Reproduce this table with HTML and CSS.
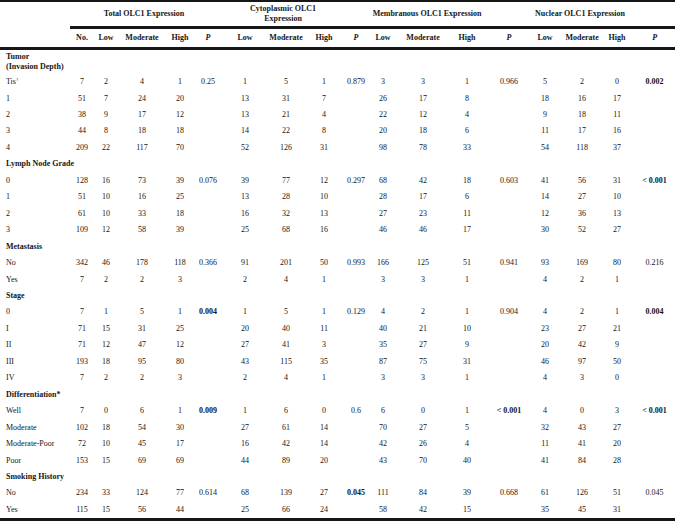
FILE: index.html
```html
<!DOCTYPE html>
<html lang="en">
<head>
<meta charset="utf-8">
<title>OLC1 Expression</title>
<link rel="stylesheet" href="styles.css">
</head>
<body>
<table class="olc">
  <colgroup>
    <col class="c-label"><col class="c-no">
    <col class="c-24"><col class="c-48"><col class="c-28"><col class="c-28">
    <col class="c-46"><col class="c-36"><col class="c-40"><col class="c-24">
    <col class="c-30"><col class="c-50"><col class="c-38"><col class="c-46">
    <col class="c-26"><col class="c-48"><col class="c-22"><col class="c-47">
  </colgroup>
  <thead>
    <tr class="group">
      <th class="blank"></th>
      <th class="ruled"></th>
      <th class="ruled" colspan="3">Total OLC1 Expression</th>
      <th class="ruled"></th>
      <th class="ruled" colspan="3">Cytoplasmic OLC1<br>Expression</th>
      <th class="ruled"></th>
      <th class="ruled" colspan="3">Membranous OLC1 Expression</th>
      <th class="ruled"></th>
      <th class="ruled" colspan="3">Nuclear OLC1 Expression</th>
      <th class="ruled"></th>
    </tr>
    <tr class="cols">
      <th></th><th>No.</th>
      <th>Low</th><th>Moderate</th><th>High</th><th class="p">P</th>
      <th>Low</th><th>Moderate</th><th>High</th><th class="p">P</th>
      <th>Low</th><th>Moderate</th><th>High</th><th class="p">P</th>
      <th>Low</th><th>Moderate</th><th>High</th><th class="p last">P</th>
    </tr>
  </thead>
  <tbody>
    <tr class="section tall"><td colspan="18">Tumor<br>(Invasion Depth)</td></tr>
    <tr><td>Tis<sup>†</sup></td><td>7</td><td>2</td><td>4</td><td>1</td><td>0.25</td><td>1</td><td>5</td><td>1</td><td>0.879</td><td>3</td><td>3</td><td>1</td><td>0.966</td><td>5</td><td>2</td><td>0</td><td class="last b">0.002</td></tr>
    <tr><td>1</td><td>51</td><td>7</td><td>24</td><td>20</td><td></td><td>13</td><td>31</td><td>7</td><td></td><td>26</td><td>17</td><td>8</td><td></td><td>18</td><td>16</td><td>17</td><td class="last"></td></tr>
    <tr><td>2</td><td>38</td><td>9</td><td>17</td><td>12</td><td></td><td>13</td><td>21</td><td>4</td><td></td><td>22</td><td>12</td><td>4</td><td></td><td>9</td><td>18</td><td>11</td><td class="last"></td></tr>
    <tr><td>3</td><td>44</td><td>8</td><td>18</td><td>18</td><td></td><td>14</td><td>22</td><td>8</td><td></td><td>20</td><td>18</td><td>6</td><td></td><td>11</td><td>17</td><td>16</td><td class="last"></td></tr>
    <tr><td>4</td><td>209</td><td>22</td><td>117</td><td>70</td><td></td><td>52</td><td>126</td><td>31</td><td></td><td>98</td><td>78</td><td>33</td><td></td><td>54</td><td>118</td><td>37</td><td class="last"></td></tr>

    <tr class="section"><td colspan="18">Lymph Node Grade</td></tr>
    <tr><td>0</td><td>128</td><td>16</td><td>73</td><td>39</td><td>0.076</td><td>39</td><td>77</td><td>12</td><td>0.297</td><td>68</td><td>42</td><td>18</td><td>0.603</td><td>41</td><td>56</td><td>31</td><td class="last b">&lt; 0.001</td></tr>
    <tr><td>1</td><td>51</td><td>10</td><td>16</td><td>25</td><td></td><td>13</td><td>28</td><td>10</td><td></td><td>28</td><td>17</td><td>6</td><td></td><td>14</td><td>27</td><td>10</td><td class="last"></td></tr>
    <tr><td>2</td><td>61</td><td>10</td><td>33</td><td>18</td><td></td><td>16</td><td>32</td><td>13</td><td></td><td>27</td><td>23</td><td>11</td><td></td><td>12</td><td>36</td><td>13</td><td class="last"></td></tr>
    <tr><td>3</td><td>109</td><td>12</td><td>58</td><td>39</td><td></td><td>25</td><td>68</td><td>16</td><td></td><td>46</td><td>46</td><td>17</td><td></td><td>30</td><td>52</td><td>27</td><td class="last"></td></tr>

    <tr class="section"><td colspan="18">Metastasis</td></tr>
    <tr><td>No</td><td>342</td><td>46</td><td>178</td><td>118</td><td>0.366</td><td>91</td><td>201</td><td>50</td><td>0.993</td><td>166</td><td>125</td><td>51</td><td>0.941</td><td>93</td><td>169</td><td>80</td><td class="last">0.216</td></tr>
    <tr><td>Yes</td><td>7</td><td>2</td><td>2</td><td>3</td><td></td><td>2</td><td>4</td><td>1</td><td></td><td>3</td><td>3</td><td>1</td><td></td><td>4</td><td>2</td><td>1</td><td class="last"></td></tr>

    <tr class="section"><td colspan="18">Stage</td></tr>
    <tr><td>0</td><td>7</td><td>1</td><td>5</td><td>1</td><td class="b">0.004</td><td>1</td><td>5</td><td>1</td><td>0.129</td><td>4</td><td>2</td><td>1</td><td>0.904</td><td>4</td><td>2</td><td>1</td><td class="last b">0.004</td></tr>
    <tr><td>I</td><td>71</td><td>15</td><td>31</td><td>25</td><td></td><td>20</td><td>40</td><td>11</td><td></td><td>40</td><td>21</td><td>10</td><td></td><td>23</td><td>27</td><td>21</td><td class="last"></td></tr>
    <tr><td>II</td><td>71</td><td>12</td><td>47</td><td>12</td><td></td><td>27</td><td>41</td><td>3</td><td></td><td>35</td><td>27</td><td>9</td><td></td><td>20</td><td>42</td><td>9</td><td class="last"></td></tr>
    <tr><td>III</td><td>193</td><td>18</td><td>95</td><td>80</td><td></td><td>43</td><td>115</td><td>35</td><td></td><td>87</td><td>75</td><td>31</td><td></td><td>46</td><td>97</td><td>50</td><td class="last"></td></tr>
    <tr><td>IV</td><td>7</td><td>2</td><td>2</td><td>3</td><td></td><td>2</td><td>4</td><td>1</td><td></td><td>3</td><td>3</td><td>1</td><td></td><td>4</td><td>3</td><td>0</td><td class="last"></td></tr>

    <tr class="section"><td colspan="18">Differentiation*</td></tr>
    <tr><td>Well</td><td>7</td><td>0</td><td>6</td><td>1</td><td class="b">0.009</td><td>1</td><td>6</td><td>0</td><td>0.6</td><td>6</td><td>0</td><td>1</td><td class="b">&lt; 0.001</td><td>4</td><td>0</td><td>3</td><td class="last b">&lt; 0.001</td></tr>
    <tr><td>Moderate</td><td>102</td><td>18</td><td>54</td><td>30</td><td></td><td>27</td><td>61</td><td>14</td><td></td><td>70</td><td>27</td><td>5</td><td></td><td>32</td><td>43</td><td>27</td><td class="last"></td></tr>
    <tr><td>Moderate-Poor</td><td>72</td><td>10</td><td>45</td><td>17</td><td></td><td>16</td><td>42</td><td>14</td><td></td><td>42</td><td>26</td><td>4</td><td></td><td>11</td><td>41</td><td>20</td><td class="last"></td></tr>
    <tr><td>Poor</td><td>153</td><td>15</td><td>69</td><td>69</td><td></td><td>44</td><td>89</td><td>20</td><td></td><td>43</td><td>70</td><td>40</td><td></td><td>41</td><td>84</td><td>28</td><td class="last"></td></tr>

    <tr class="section"><td colspan="18">Smoking History</td></tr>
    <tr><td>No</td><td>234</td><td>33</td><td>124</td><td>77</td><td>0.614</td><td>68</td><td>139</td><td>27</td><td class="b">0.045</td><td>111</td><td>84</td><td>39</td><td>0.668</td><td>61</td><td>126</td><td>51</td><td class="last">0.045</td></tr>
    <tr class="end"><td>Yes</td><td>115</td><td>15</td><td>56</td><td>44</td><td></td><td>25</td><td>66</td><td>24</td><td></td><td>58</td><td>42</td><td>15</td><td></td><td>35</td><td>45</td><td>31</td><td class="last"></td></tr>
  </tbody>
</table>
</body>
</html>
```

FILE: styles.css
```css
html, body {
  margin: 0;
  padding: 0;
  background: #ffffff;
}

body {
  font-family: "Liberation Serif", "Times New Roman", serif;
  font-size: 8px;
  color: #161616;
}

.olc {
  width: 675px;
  table-layout: fixed;
  border-collapse: separate;
  border-spacing: 0;
}

.c-label { width: 70px; }
.c-no { width: 24px; }
.c-22 { width: 22px; }
.c-24 { width: 24px; }
.c-26 { width: 26px; }
.c-28 { width: 28px; }
.c-30 { width: 30px; }
.c-36 { width: 36px; }
.c-38 { width: 38px; }
.c-40 { width: 40px; }
.c-46 { width: 46px; }
.c-47 { width: 47px; }
.c-48 { width: 48px; }
.c-50 { width: 50px; }

.olc th,
.olc td {
  padding: 3px 0;
  line-height: 10.45px;
  text-align: center;
  vertical-align: middle;
  white-space: nowrap;
}

.olc th {
  font-weight: bold;
}

.group th {
  border-top: 2px solid #161616;
  padding: 1.5px 0;
  height: 21px;
}

.group th.ruled {
  border-bottom: 3px solid #161616;
}

.cols th {
  padding: 4px 0 3.55px;
  border-bottom: 3px solid #161616;
}

.cols th.p {
  font-style: italic;
}

.olc th.last,
.olc td.last {
  padding-left: 6px;
}

.olc tbody td:first-child {
  text-align: left;
  padding-left: 6px;
}

.section td {
  font-weight: bold;
}

.section.tall td {
  padding: 1.6px 0 1.6px 6px;
}

.olc td.b {
  font-weight: bold;
}

.end td {
  border-bottom: 3px solid #161616;
}

sup {
  font-size: 5px;
  line-height: 0;
  vertical-align: 3px;
}
```
